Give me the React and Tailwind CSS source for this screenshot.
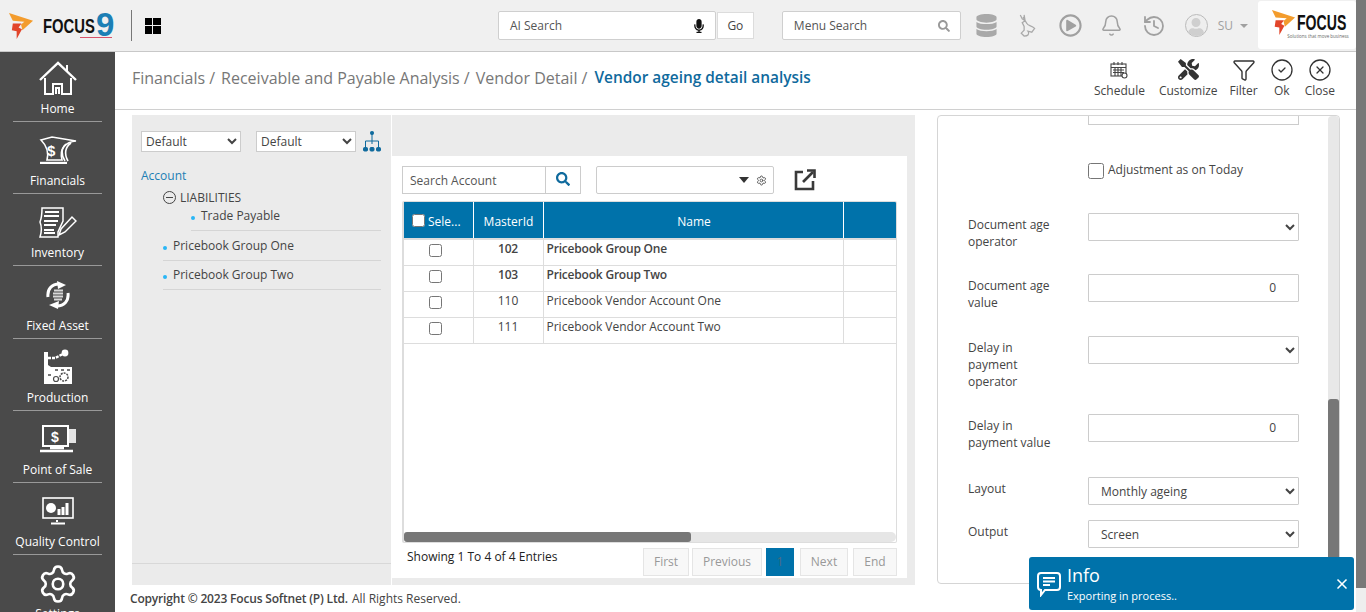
import { Bell, CircleCheck, CircleX, Funnel, History, Settings, X } from "lucide-react";
import { FaDatabase, FaMicrophone, FaRegPlayCircle, FaSearch, FaTools, FaUser } from "react-icons/fa";

const font = { fontFamily: '"Open Sans", sans-serif' };

const HomeIcon = () => (
  <svg width="38" height="36" viewBox="0 0 38 36" fill="none" stroke="white" strokeWidth="2" className="mt-[2px]">
    <path d="M1 19 L19 2 L37 19" strokeWidth="2.4" />
    <path d="M28 10 V4" />
    <path d="M6 17 V33 H14 V23 H23 V33 H32 V17" />
    <path d="M17 33 V27 H20 V33" />
  </svg>
);

const FinancialsIcon = () => (
  <svg width="38" height="28" viewBox="0 0 38 28" fill="none" stroke="white" strokeWidth="1.6">
    <path d="M2 4 L13 1 L37 5 C27 6 20 12 23 24 H8 C10 16 7 9 2 4 Z" />
    <path d="M27 8 C22 12 22 19 26 25 M32 7 C26 11 25 18 29 25" />
    <path d="M1 27 H28" strokeWidth="2.4" />
    <text x="8" y="20" fontSize="15" fontWeight="700" fill="white" stroke="none" fontFamily="Liberation Sans">$</text>
  </svg>
);

const InventoryIcon = () => (
  <svg width="38" height="31" viewBox="0 0 38 31" fill="none" stroke="white" strokeWidth="1.5">
    <path d="M3 1 H24 V14 L19 25 V30 H1 C3 24 3 20 1 15 C3 10 3 6 3 1 Z" />
    <path d="M6 5 H20 M5 9 H20 M5 14 H19 M5 18 H17 M5 23 H15 M5 26 H16" strokeWidth="2" />
    <path d="M20 28 L22 22 L33 10 L37 14 L26 25 Z" />
  </svg>
);

const FixedAssetIcon = () => (
  <svg width="24" height="28" viewBox="0 0 24 28" fill="none" stroke="white" strokeWidth="3">
    <path d="M2 16 C1 8 6 3 13 3" />
    <path d="M11 0 L20 4 L12 8 Z" fill="white" stroke="none" />
    <path d="M22 12 C23 20 18 25 11 25" />
    <path d="M13 20 L3 24 L12 28 Z" fill="white" stroke="none" />
    <path d="M8 9.5 H17 M7 12.5 H17 M7 15.5 H17 M8 18.5 H16" strokeWidth="2.2" stroke="#d8d8d8" />
  </svg>
);

const ProductionIcon = () => (
  <svg width="30" height="36" viewBox="0 0 30 36" fill="white">
    <path d="M1 35 V3 H5 V16 L8 18 H29 V35 Z" />
    <path d="M5 9 H12 L20 5" stroke="white" strokeWidth="2.4" strokeDasharray="3 1" fill="none" />
    <circle cx="22" cy="4" r="3.4" />
    <circle cx="21" cy="28" r="4" fill="none" stroke="#4a4a4a" strokeWidth="1.5" strokeDasharray="2 1" />
    <circle cx="13" cy="30" r="2.5" fill="none" stroke="#4a4a4a" strokeWidth="1.2" />
    <path d="M12 21 H15 M18 21 H21 M24 21 H27 M5 26 H8" stroke="#4a4a4a" strokeWidth="1.5" />
  </svg>
);

const PosIcon = () => (
  <svg width="36" height="28" viewBox="0 0 36 28" fill="none" stroke="white" strokeWidth="2">
    <rect x="3" y="1" width="25" height="20" />
    <path d="M29 4 H36 V18 H29 Z" fill="white" stroke="none" opacity="0.85" />
    <path d="M0 26 H33 M10 23 H24" strokeWidth="2.4" />
    <text x="11" y="17" fontSize="14" fontWeight="700" fill="white" stroke="none" fontFamily="Liberation Sans">$</text>
  </svg>
);

const QualityIcon = () => (
  <svg width="32" height="28" viewBox="0 0 32 28" fill="none" stroke="white" strokeWidth="1.6">
    <rect x="1" y="1" width="30" height="20" />
    <path d="M15 23 V25 M9 26.5 H23" strokeWidth="2" />
    <circle cx="9" cy="11" r="5" fill="white" stroke="none" />
    <path d="M17 18 V12 M21 18 V10 M25 18 V6" strokeWidth="3" />
  </svg>
);

const nav = [
  ["Home", <HomeIcon />],
  ["Financials", <FinancialsIcon />],
  ["Inventory", <InventoryIcon />],
  ["Fixed Asset", <FixedAssetIcon />],
  ["Production", <ProductionIcon />],
  ["Point of Sale", <PosIcon />],
  ["Quality Control", <QualityIcon />],
];

const rows = [
  ["102", "Pricebook Group One", true],
  ["103", "Pricebook Group Two", true],
  ["110", "Pricebook Vendor Account One", false],
  ["111", "Pricebook Vendor Account Two", false],
];

const LogoArrow = ({ size = 26 }) => (
  <svg width={size} height={size} viewBox="0 0 25 27">
    <path d="M0 0 L25 8 L14 18 L12.5 12 L16 9 L4 8 Z" fill="#f39c2d" />
    <path d="M4 11 L13 11 L10 15 L13.5 17 L8 27 L8 19 L3 18 Z" fill="#e2452a" />
  </svg>
);

const DeerIcon = () => (
  <svg width="18" height="23" viewBox="0 0 18 24" fill="none" stroke="#a9a9a9" strokeWidth="1.3">
    <path d="M2 1 L4 5 L7 7 L5 3 M7 7 L6 1 M7 7 L9 10 C9 12 14 12 17 15 L14 19 L10 18 C12 21 10 23 6 23 L3 20 L6 17 L6 13 L4 9 L7 7" />
  </svg>
);

const logoText = { fontFamily: '"Liberation Sans", sans-serif' };

const TopBar = () => (
  <header className="flex h-[52px] shrink-0 items-center border-b border-[#c8c8c8] bg-[#f0f0f0]">
    <div className="relative ml-[8px] flex w-[107px] items-center">
      <LogoArrow />
      <div className="ml-[9px] w-[53px]">
        <span className="block origin-left scale-x-[0.74] text-[20px] leading-none font-bold whitespace-nowrap text-[#111]" style={logoText}>
          FOCUS
        </span>
      </div>
      <span className="mt-[-3px] text-[33px] leading-none font-bold text-[#1c7fb5]" style={logoText}>9</span>
      <span className="absolute top-[26px] left-[72px] h-px w-[32px] bg-[#d9536a]" />
    </div>
    <div className="ml-[16px] h-[31px] w-px bg-[#777]" />
    <div className="ml-[13px] grid h-[16px] w-[16px] grid-cols-2 gap-[1px]">
      <span className="bg-black" />
      <span className="bg-black" />
      <span className="bg-black" />
      <span className="bg-black" />
    </div>
    <div className="ml-[337px] flex h-[29px] w-[218px] items-center justify-between rounded-[2px] border border-[#cfcfcf] bg-white pr-[9px] pl-[11px] text-[12px] text-[#555]">
      AI Search
      <FaMicrophone className="text-[14px] text-[#111]" />
    </div>
    <div className="ml-[1px] flex h-[27px] w-[37px] items-center justify-center border border-[#dcdcdc] bg-white text-[12px] text-[#444]">Go</div>
    <div className="ml-[28px] flex h-[29px] w-[179px] items-center justify-between rounded-[2px] border border-[#cfcfcf] bg-white pr-[10px] pl-[11px] text-[12px] text-[#555]">
      Menu Search
      <FaSearch className="text-[12px] text-[#999]" />
    </div>
    <FaDatabase className="ml-[14px] text-[23px] text-[#a9a9a9]" />
    <div className="ml-[20px]"><DeerIcon /></div>
    <FaRegPlayCircle className="ml-[23px] text-[23px] text-[#a0a0a0]" />
    <Bell size={23} strokeWidth={1.6} className="ml-[18px] text-[#a0a0a0]" />
    <History size={24} strokeWidth={1.8} className="ml-[19px] text-[#a0a0a0]" />
    <div className="ml-[19px] flex h-[23px] w-[23px] items-end justify-center overflow-hidden rounded-full border border-[#bbb] bg-[#eee]">
      <FaUser className="text-[18px] text-[#cfcfcf]" />
    </div>
    <span className="ml-[10px] text-[12px] text-[#a0a0a0]">SU</span>
    <span className="mt-[1px] ml-[7px] h-0 w-0 border-x-[4px] border-t-[4px] border-x-transparent border-t-[#a0a0a0]" />
    <div className="mb-[2px] ml-[10px] flex h-[48px] w-[98px] flex-col items-center justify-center rounded-[3px] bg-white">
      <div className="flex items-center">
        <LogoArrow size={25} />
        <div className="ml-[1px] w-[47px]">
          <span className="block origin-left scale-x-[0.64] text-[22px] leading-none font-bold whitespace-nowrap text-[#111]" style={logoText}>FOCUS</span>
        </div>
      </div>
      <span className="mt-[-1px] ml-[22px] text-[4.5px] leading-none text-[#666]">Solutions that move business</span>
    </div>
  </header>
);

const Sidebar = () => (
  <aside className="w-[115px] shrink-0 overflow-hidden bg-[#4a4a4a] text-white">
    {nav.map(([label, icon], i) => (
      <div key={label} className={`mx-[13px] flex flex-col items-center justify-end border-b border-[#999] pb-[4px] ${i === 0 ? "h-[70px]" : "h-[72.2px]"}`}>
        <div className="flex h-[44px] items-center justify-center">{icon}</div>
        <span className="text-[12px] leading-[17px] whitespace-nowrap">{label}</span>
      </div>
    ))}
    <div className="flex flex-col items-center pt-[8px]">
      <Settings size={42} strokeWidth={1.5} />
      <span className="text-[12px] leading-[17px]">Settings</span>
    </div>
  </aside>
);

const tools = [
  ["Schedule", <svg width="18" height="18" viewBox="0 0 18 18" fill="none" stroke="#444" strokeWidth="1.1"><rect x="1" y="3" width="15" height="12" /><path d="M1 6.5 H16 M4 1 V4 M8 1 V4 M12 1 V4 M3 9 H14 M3 11.5 H14 M5 7 V15 M8 7 V15 M11 7 V15" /><circle cx="14.5" cy="14.5" r="2.5" fill="white" /></svg>, "ml-0"],
  ["Customize", <FaTools className="text-[21px] text-[#333]" />, "ml-[14px]"],
  ["Filter", <Funnel size={24} strokeWidth={1.4} className="text-[#333]" />, "ml-[12px]"],
  ["Ok", <CircleCheck size={24} strokeWidth={1.3} className="text-[#333]" />, "ml-[12px]"],
  ["Close", <CircleX size={24} strokeWidth={1.3} className="text-[#333]" />, "ml-[11px]"],
];

const TitleBar = () => (
  <div className="flex h-[58px] shrink-0 items-start border-b border-[#d0d0d0] bg-white">
    <div className="mt-[15px] ml-[17px] flex items-center gap-[4px] text-[16px] leading-[22px] text-[#777]">
      <span>Financials /</span>
      <span className="ml-[2px]">Receivable and Payable Analysis /</span>
      <span className="ml-[2px]">Vendor Detail /</span>
      <span className="ml-[3px] text-[15.4px] font-semibold text-[#0f6a9d]">Vendor ageing detail analysis</span>
    </div>
    <div className="mt-[5px] mr-[21px] ml-auto flex">
      {tools.map(([label, icon, gap]) => (
        <div key={label} className={`flex flex-col items-center text-[12px] leading-[16px] text-[#444] ${gap}`}>
          <div className="flex h-[25px] items-center">{icon}</div>
          <span className="mt-[1px]">{label}</span>
        </div>
      ))}
    </div>
  </div>
);

const TreePanel = () => (
  <div className="flex w-[259px] shrink-0 flex-col bg-[#ebebeb] pt-[16px] text-[12px] text-[#444]">
    <div className="flex items-center pl-[9px]">
      <select className="h-[21px] w-[100px] border border-[#ccc] bg-white text-[12px]"><option>Default</option></select>
      <select className="ml-[15px] h-[21px] w-[100px] border border-[#ccc] bg-white text-[12px]"><option>Default</option></select>
      <svg width="18" height="21" viewBox="0 0 18 21" className="ml-[7px]" fill="#0f6a9d" stroke="#0f6a9d">
        <rect x="7.5" y="0.5" width="3" height="3" rx="1" />
        <path d="M9 3 V13 M2.5 17 V10 H15.5 V17" fill="none" />
        <rect x="0.5" y="16.5" width="4" height="3.5" rx="1" />
        <rect x="7" y="16.5" width="4" height="3.5" rx="1" />
        <rect x="13.5" y="16.5" width="4" height="3.5" rx="1" />
      </svg>
    </div>
    <div className="mt-[15px] pl-[9px] leading-[17px] text-[#1c7fb5]">Account</div>
    <div className="mt-[5px] mr-[10px] ml-[31px]">
      <div className="flex items-center leading-[17px]">
        <span className="flex h-[13px] w-[13px] items-center justify-center rounded-full border border-[#444]"><span className="h-px w-[7px] bg-[#444]" /></span>
        <span className="ml-[4px]">LIABILITIES</span>
      </div>
      <div className="ml-[28px] flex items-center border-b border-[#d5d5d5] pt-[1px] pb-[6px] leading-[17px]">
        <span className="mt-[4px] h-[4px] w-[4px] rounded-full bg-[#29b6f6]" />
        <span className="ml-[6px]">Trade Payable</span>
      </div>
      {["Pricebook Group One", "Pricebook Group Two"].map((t) => (
        <div key={t} className="flex h-[29.5px] items-center border-b border-[#d5d5d5] pt-[1px]">
          <span className="mt-[4px] h-[4px] w-[4px] rounded-full bg-[#29b6f6]" />
          <span className="ml-[6px]">{t}</span>
        </div>
      ))}
    </div>
    <div className="mt-auto mb-[21px] border-t border-[#d8d8d8]" />
  </div>
);

const GridPanel = () => (
  <div className="flex-1 bg-[#ebebeb] pt-[41px]">
    <div className="h-[422px] w-[515px] bg-white px-[10px] pt-[10px] text-[12px] text-[#444]">
      <div className="flex h-[28px] items-center">
        <div className="flex h-[28px] w-[179px] items-center border border-[#ccc]">
          <span className="w-[142px] pt-[1px] pl-[7px] text-[#555]">Search Account</span>
          <span className="flex h-full flex-1 items-center justify-center border-l border-[#ccc] pb-[3px]"><FaSearch className="text-[14px] text-[#0f6a9d]" /></span>
        </div>
        <div className="ml-[15px] flex h-[28px] w-[178px] items-center justify-end rounded-[2px] border border-[#ccc] pr-[6px]">
          <span className="h-0 w-0 border-x-[5px] border-t-[6px] border-x-transparent border-t-[#333]" />
          <Settings size={11} className="ml-[7px] text-[#555]" />
        </div>
        <svg width="22" height="22" viewBox="0 0 22 22" className="ml-[20px]" fill="none" stroke="#3a3a3a" strokeWidth="2.6">
          <path d="M9 3 H2 V20 H19 V12" />
          <path d="M9 13 L19 3" />
          <path d="M13 1.5 H20.5 V9" fill="none" />
        </svg>
      </div>
      <div className="mt-[7px] flex h-[342px] flex-col overflow-hidden rounded-[2px] border border-l-2 border-[#ddd]">
        <table className="w-full table-fixed border-collapse">
          <thead>
            <tr className="h-[37px] bg-[#0072aa] text-[12px] font-normal text-white">
              <th className="w-[69px] border-r border-white pt-[4px] pl-[8px] text-left font-normal">
                <span className="flex items-center">
                  <input type="checkbox" className="mt-[-3px] h-[13px] w-[13px]" />
                  <span className="ml-[3px]">Sele...</span>
                </span>
              </th>
              <th className="w-[70px] border-r border-white pt-[4px] pl-[1px] font-normal">MasterId</th>
              <th className="w-[300px] border-r border-white pt-[4px] pl-[2px] font-normal">Name</th>
              <th className="font-normal" />
            </tr>
          </thead>
          <tbody className="border-t-2 border-[#ddd]">
            {rows.map(([id, name, bold]) => (
              <tr key={id} className={`h-[26px] border-b border-[#ddd] ${bold ? "font-semibold tracking-[-0.2px]" : ""}`}>
                <td className="border-r border-[#ddd] pr-[5px] text-center align-middle"><input type="checkbox" className="mt-[1px] h-[13px] w-[13px]" /></td>
                <td className="border-r border-[#ddd] pb-[6px] text-center">{id}</td>
                <td className="border-r border-[#ddd] pb-[6px] pl-[3px]">{name}</td>
                <td />
              </tr>
            ))}
          </tbody>
        </table>
        <div className="mt-auto h-[10px] rounded-full bg-[#e6e6e6]">
          <div className="h-full w-[287px] rounded-[3px] bg-[#777]" />
        </div>
      </div>
      <div className="flex items-start justify-between">
        <span className="mt-[5px] ml-[5px] text-[#222]">Showing 1 To 4 of 4 Entries</span>
        <div className="mt-[5px] flex h-[28px] text-[#999]">
          <span className="flex w-[46px] items-center justify-center border border-[#e5e5e5] bg-[#f8f8f8]">First</span>
          <span className="ml-[3px] flex w-[70px] items-center justify-center border border-[#e5e5e5] bg-[#f8f8f8]">Previous</span>
          <span className="ml-[4px] flex w-[28px] items-center justify-center bg-[#0072aa] text-[#4a6a80]">1</span>
          <span className="ml-[6px] flex w-[48px] items-center justify-center border border-[#e5e5e5] bg-[#f8f8f8]">Next</span>
          <span className="ml-[5px] flex w-[44px] items-center justify-center border border-[#e5e5e5] bg-[#f8f8f8]">End</span>
        </div>
      </div>
    </div>
  </div>
);

const selectCls = "h-[28px] w-full rounded-[1px] border border-[#ccc] bg-white pl-[8px] text-[12px] text-[#444]";
const valueCls = "flex h-[28px] items-center justify-end rounded-[1px] border border-[#ccc] bg-white pr-[22px]";

const FormRow = ({ label, className, children }) => (
  <div className={`grid grid-cols-[120px_211px] ${className}`}>
    <div className="pt-[3px] pr-[30px] leading-[17px]">{label}</div>
    {children}
  </div>
);

const FormPanel = () => (
  <div className="mb-[1px] ml-[22px] flex w-[403px] shrink-0 overflow-hidden rounded-[4px] border border-[#d5d5d5] bg-white text-[12px] text-[#444]">
    <div className="flex-1 pl-[30px]">
      <div className="ml-[120px] h-[9px] w-[211px] border-x border-b border-[#ccc]" />
      <div className="mt-[38px] ml-[120px] flex items-center">
        <input type="checkbox" className="h-[16px] w-[16px]" />
        <span className="mt-[-3px] ml-[4px]">Adjustment as on Today</span>
      </div>
      <FormRow label="Document age operator" className="mt-[34px]"><select className={selectCls}><option /></select></FormRow>
      <FormRow label="Document age value" className="mt-[24px]"><div className={valueCls}>0</div></FormRow>
      <FormRow label="Delay in payment operator" className="mt-[25px]"><select className={selectCls}><option /></select></FormRow>
      <FormRow label="Delay in payment value" className="mt-[24px]"><div className={valueCls}>0</div></FormRow>
      <FormRow label="Layout" className="mt-[26px]"><select className={selectCls}><option>Monthly ageing</option></select></FormRow>
      <FormRow label="Output" className="mt-[15px]"><select className={selectCls}><option>Screen</option></select></FormRow>
    </div>
    <div className="flex w-[11px] flex-col justify-end rounded-[4px] bg-[#e8e8e8]">
      <div className="h-[184px] rounded-[3px] bg-[#777]" />
    </div>
  </div>
);

export default function App() {
  return (
    <div className="relative flex h-[612px] w-[1366px] overflow-hidden bg-white" style={font}>
      <div className="flex w-[1356px] flex-col">
        <TopBar />
        <div className="flex min-h-0 flex-1">
          <Sidebar />
          <main className="flex min-w-0 flex-1 flex-col">
            <TitleBar />
            <div className="flex min-h-0 flex-1 pt-[5px] pl-[17px]">
              <div className="flex w-[783px] shrink-0">
                <TreePanel />
                <div className="w-px bg-white" />
                <GridPanel />
              </div>
              <FormPanel />
            </div>
            <footer className="flex h-[27px] shrink-0 items-center pl-[15px] text-[12px] text-[#444]">
              <span className="font-semibold tracking-[-0.18px]">Copyright © 2023 Focus Softnet (P) Ltd.</span>
              <span className="ml-[4px]">All Rights Reserved.</span>
            </footer>
          </main>
        </div>
      </div>
      <div className="flex w-[10px] flex-col bg-[#eee]">
        <div className="h-[588px] bg-[#787878]" />
      </div>

      {/* info toast */}
      <div className="absolute top-[557px] left-[1029px] flex h-[53px] w-[325px] items-center rounded-[3px] bg-[#0072aa] text-white">
        <svg width="26" height="26" viewBox="0 0 26 26" className="ml-[7px]" fill="none" stroke="white" strokeWidth="2">
          <path d="M5 2 H21 C23 2 24 3 24 5 V16 C24 18 23 19 21 19 H9 L5 24 V19 C3 19 2 18 2 16 V5 C2 3 3 2 5 2 Z" />
          <path d="M7 7 H19 M7 10.5 H19 M7 14 H14" />
        </svg>
        <div className="ml-[5px] flex flex-col">
          <span className="text-[18px] leading-[22px]">Info</span>
          <span className="mt-[2px] text-[11px] leading-[16px]">Exporting in process..</span>
        </div>
        <X size={16} strokeWidth={2.5} className="mr-[4px] ml-auto" />
      </div>
    </div>
  );
}
